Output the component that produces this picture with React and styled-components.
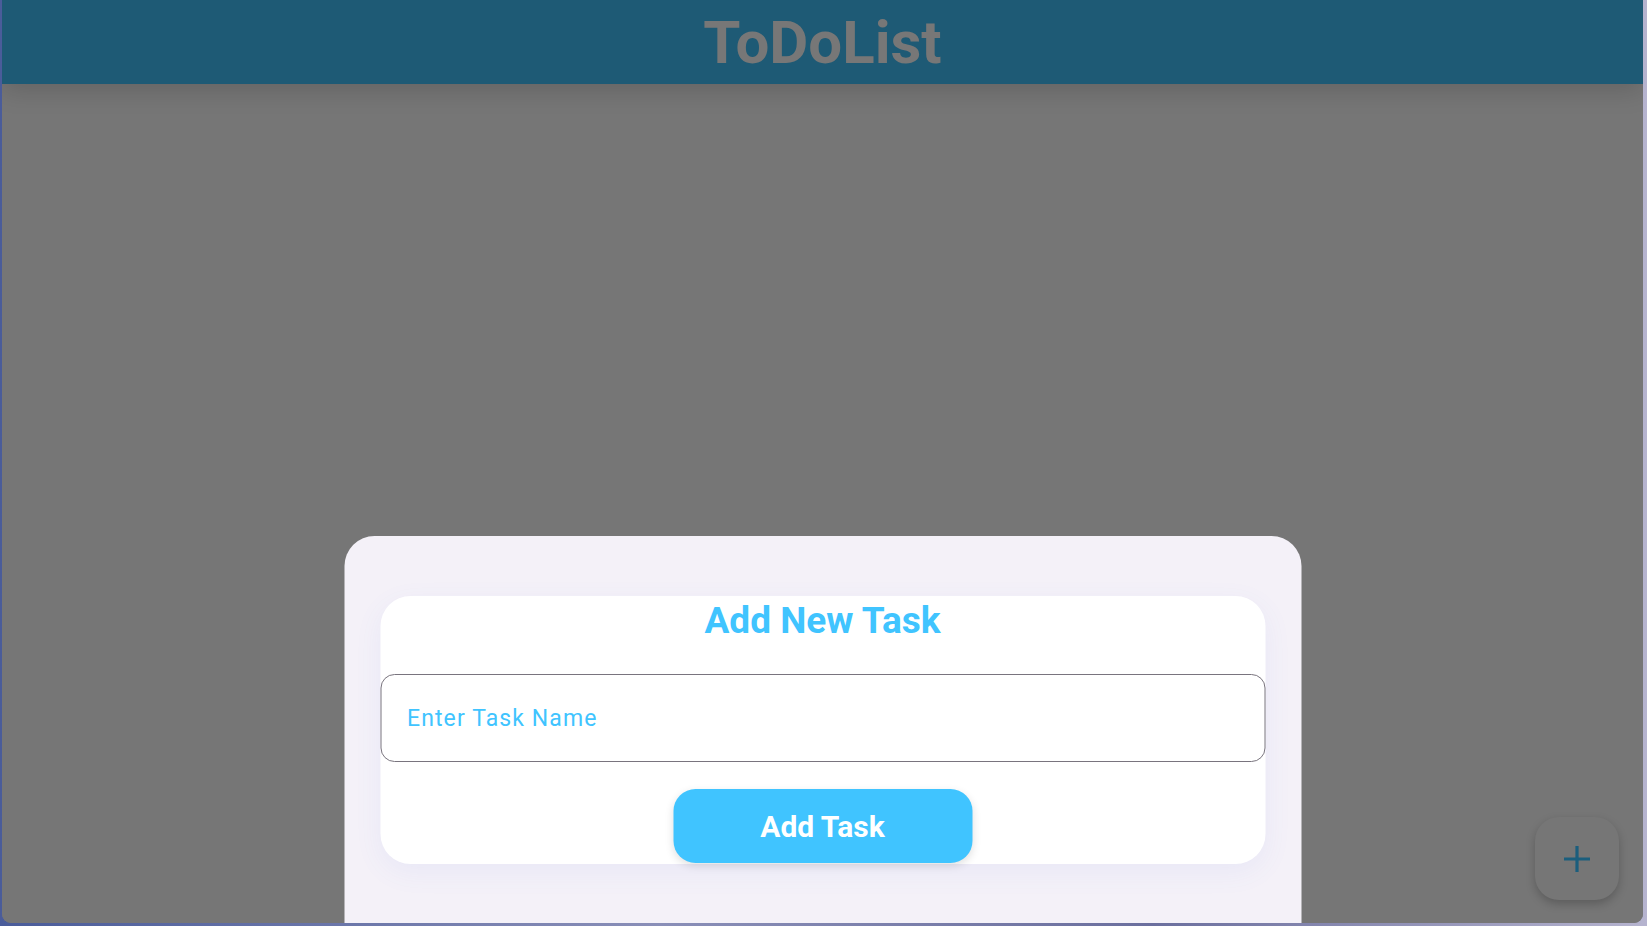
import styled, { createGlobalStyle } from 'styled-components';

const GlobalStyle = createGlobalStyle`
  html, body {
    margin: 0;
    padding: 0;
    height: 100%;
    overflow: hidden;
  }
  body {
    background: linear-gradient(90deg, #4a5c9a 0%, #8a8fb8 40%, #6b6f9e 70%, #b6b4cf 100%);
    font-family: Roboto, "Liberation Sans", sans-serif;
  }
`;

export default function App () {
  return (
    <>
      <GlobalStyle />
      <Window>
        <Header>
          <Title>ToDoList</Title>
        </Header>
        <Body>
          <Sheet>
            <Card>
              <CardTitle>Add New Task</CardTitle>
              <Input placeholder='Enter Task Name' />
              <AddButton>Add Task</AddButton>
            </Card>
          </Sheet>
          <Fab aria-label='add'>
            <svg width='28' height='28' viewBox='0 0 28 28'>
              <path d='M14 1v26M1 14h26' stroke='#1b5e7d' strokeWidth='3.2' fill='none' />
            </svg>
          </Fab>
        </Body>
      </Window>
    </>
  );
}

const Window = styled.div`
  margin: 0 4px 0 2px;
  height: 923px;
  display: flex;
  flex-direction: column;
  border-radius: 0 0 9px 9px;
  overflow: hidden;
  background: #767676;
`;
const Header = styled.header`
  height: 84px;
  flex: none;
  display: flex;
  justify-content: center;
  align-items: center;
  background: #1e5a75;
  position: relative;
  z-index: 2;
  box-shadow: 0 6px 24px rgba(0, 0, 0, 0.16);
`;
const Title = styled.h1`
  margin: 0;
  font-size: 60px;
  font-weight: 700;
  color: #777777;
  line-height: 1;
  padding-top: 2px;
`;
const Body = styled.main`
  flex: 1;
  position: relative;
  background: #767676;
`;
const Sheet = styled.div`
  position: absolute;
  left: 50%;
  bottom: 0;
  transform: translateX(-50%);
  width: 957px;
  height: 387px;
  box-sizing: border-box;
  padding: 60px 36px 0;
  background: #f4f1f8;
  border-radius: 30px 30px 0 0;
`;
const Card = styled.div`
  background: #ffffff;
  border-radius: 30px;
  height: 268px;
  box-sizing: border-box;
  padding-top: 3px;
  display: flex;
  flex-direction: column;
  align-items: center;
  box-shadow: 0 8px 28px rgba(90, 110, 230, 0.07);
`;
const CardTitle = styled.h2`
  margin: 0;
  font-size: 37px;
  font-weight: 700;
  color: #40c4ff;
  line-height: 43px;
`;
const Input = styled.input`
  margin-top: 32px;
  width: 100%;
  height: 88px;
  box-sizing: border-box;
  border: 1px solid #79747e;
  border-radius: 14px;
  padding: 0 26px;
  font-family: Roboto, "Liberation Sans", sans-serif;
  font-size: 23px;
  letter-spacing: 1.1px;
  color: #40c4ff;
  outline: none;
  background: transparent;
  &::placeholder {
    color: #40c4ff;
  }
`;
const AddButton = styled.button`
  margin-top: 27px;
  width: 299px;
  height: 74px;
  border: none;
  border-radius: 22px;
  background: #40c4ff;
  color: #ffffff;
  font-family: Roboto, "Liberation Sans", sans-serif;
  font-size: 30px;
  font-weight: 700;
  cursor: pointer;
  box-shadow: 0 3px 8px rgba(0, 0, 0, 0.12);
`;
const Fab = styled.button`
  position: absolute;
  right: 24px;
  bottom: 23px;
  width: 84px;
  height: 83px;
  border: none;
  border-radius: 24px;
  background: #767676;
  display: flex;
  align-items: center;
  justify-content: center;
  box-shadow: 0 4px 10px rgba(0, 0, 0, 0.22);
  cursor: pointer;
`;
